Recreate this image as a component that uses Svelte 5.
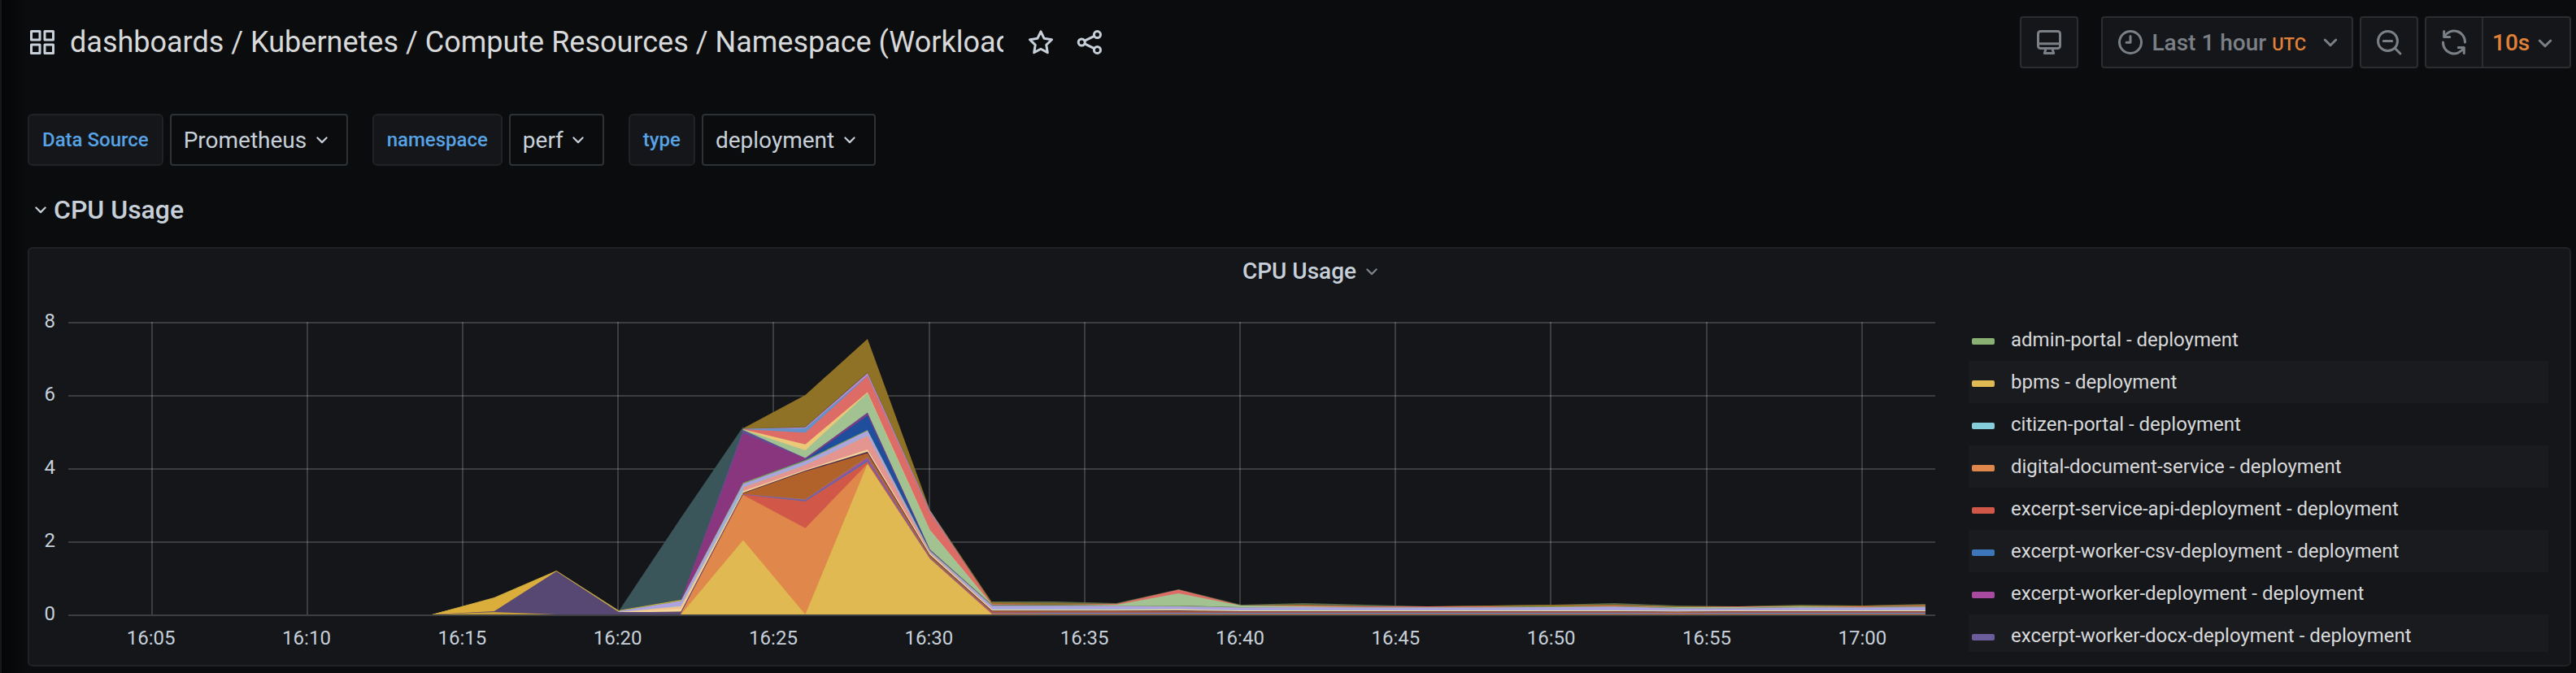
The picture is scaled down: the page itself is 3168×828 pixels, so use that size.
<script>
  const filters = [
    { id: 'datasource', label: 'Data Source', value: 'Prometheus' },
    { id: 'namespace', label: 'namespace', value: 'perf' },
    { id: 'type', label: 'type', value: 'deployment' }
  ];

  const legend = [
    ['admin-portal - deployment', '#8ab073'],
    ['bpms - deployment', '#e0b952'],
    ['citizen-portal - deployment', '#86cddc'],
    ['digital-document-service - deployment', '#e0874b'],
    ['excerpt-service-api-deployment - deployment', '#d15848'],
    ['excerpt-worker-csv-deployment - deployment', '#3c76b8'],
    ['excerpt-worker-deployment - deployment', '#a84a9f'],
    ['excerpt-worker-docx-deployment - deployment', '#6b5c9a']
  ];

  const times = ['16:05', '16:10', '16:15', '16:20', '16:25', '16:30', '16:35', '16:40', '16:45', '16:50', '16:55', '17:00'];
  const values = [8, 6, 4, 2, 0];

  const W = 2296;
  const H = 372;
  const base = 368;
  const tickX = (i) => Math.round(102.5 + i * 191.2);
  const x = (sample) => 447.3 + sample * 76.52;

  // Each layer: colour, first sample (0 = 16:14, every two minutes), heights above the axis.
  // Painted from the top of the stack down to the axis.
  const layers = [
    ['#3a565b', 3, [4, 119, 231, 0]],
    ['#5d6a48', 9, [16, 16, 14, 31, 12, 14, 12, 10, 11, 12, 14, 11, 10, 12, 11, 13]],
    ['#8f7226', 5, [229, 270, 339, 129, 15, 14, 13, 30, 11, 12, 10, 10, 11, 12, 12, 10, 10, 11, 11, 12]],
    ['#4f5f30', 5, [228.5, 231, 298, 128, 13]],
    ['#c383cb', 5, [228.3, 230.3, 297, 128, 12]],
    ['#6392cb', 5, [228.2, 229, 294, 127, 12]],
    ['#dc6c65', 5, [228, 223.7, 293.3, 126, 13, 12, 13, 30.5, 11, 11, 10, 10, 10, 10, 11, 9, 10, 10, 10, 11]],
    ['#ebc979', 5, [227.8, 209.3, 273.5, 104, 12]],
    ['#a2c391', 5, [227.6, 202, 272.5, 104, 12, 12, 12, 26, 11, 10, 9, 9, 9, 10, 10, 9, 9, 10, 9, 10]],
    ['#5f4f92', 4, [17, 227, 192.5, 248.5, 80, 12, 12, 11, 11, 9, 9, 9, 9, 9, 10, 10, 8, 8, 9, 9, 10]],
    ['#8a367f', 4, [17, 223, 192, 247, 80, 11]],
    ['#1f4f9c', 5, [161.5, 190.5, 245, 79.3, 11]],
    ['#dbae3c', 0, [0, 21, 54, 5, 18, 0]],
    ['#7ea35a', 0, [0, 20, 53, 4.5, 17, 162, 190, 227, 79, 11.5, 11.5, 11, 11, 9, 9, 9, 9, 9, 10, 10, 8, 8, 9, 9, 10]],
    ['#dbae3c', 0, [0, 20, 53, 4, 15, 0]],
    ['#aea2e0', 3, [4, 16.5, 160.5, 188.5, 226, 78, 10.5, 10.5, 10.5, 10, 8.5, 9, 8.5, 8.5, 8.5, 9, 9.5, 7.5, 7.5, 8.5, 8.5, 9]],
    ['#8fb8d4', 3, [3, 11, 157.5, 185, 221, 77, 7, 7, 7, 7, 5.5, 6, 5.5, 5.5, 5.5, 5.5, 5.5, 5, 5, 5.5, 5.5, 5.5]],
    ['#e4958f', 5, [156.5, 184, 220, 76.5, 6.5]],
    ['#f2bf93', 3, [3, 10.3, 152, 178, 203, 75.5, 6.5]],
    ['#f4d598', 3, [3, 7, 151.3, 178, 202.5, 75, 6, 6, 6, 6.5, 5, 5, 5, 5, 5, 5, 5, 4.5, 5, 5, 5, 5]],
    ['#4a2a50', 3, [2.5, 3.5, 149.7, 177, 200.3, 73.5, 4.8, 4.8, 4.8, 5, 4, 4, 4, 4, 4, 4, 4, 3.5, 4, 4, 4, 4]],
    ['#574773', 0, [0, 4, 53, 3, 3, 149, 0]],
    ['#b1622b', 4, [1.5, 149, 176, 198.5, 72.5, 4, 4, 4, 4, 3.5, 3.5, 3.5, 3.5, 3.5, 3.5, 3.5, 3, 3.5, 3.5, 3.5, 3.5]],
    ['#8f8150', 4, [1, 148.3, 142, 194.3, 70.5, 2.6]],
    ['#a84a9f', 4, [1, 148, 141.2, 193, 70, 2.5, 2.5, 2.5, 2.5, 2.5, 2.5, 2.5, 2.5, 2.5, 2.5, 2.5, 2, 2.5, 2.5, 2.5, 2.5]],
    ['#3c76b8', 4, [1, 147.6, 140.2, 190, 69.5, 2, 2, 2, 2, 2, 2, 2, 2, 2, 2, 2, 1.5, 2, 2, 2, 2]],
    ['#d15848', 4, [1, 147.4, 139.3, 188.3, 69, 1.5, 1, 1, 1, 1, 1, 1, 1, 1, 1, 1, 1, 1, 1, 1, 1]],
    ['#e0874b', 4, [1, 147, 106.3, 185.5, 68.7, 1, 1, 1, 1, 1, 1, 1, 1, 1, 1, 1, 1, 1, 1, 1, 1]],
    ['#c9a13a', 0, [0, 3, 0]],
    ['#e0b952', 4, [0, 91.5, 0, 185.2, 68.5, 0]]
  ];

  function area([, first, heights]) {
    const top = heights.map((h, i) => `${x(first + i).toFixed(1)},${(base - h).toFixed(1)}`);
    return `${x(first).toFixed(1)},${base} ${top.join(' ')} ${x(first + heights.length - 1).toFixed(1)},${base}`;
  }
</script>

{#snippet chevron(cls)}
  <svg class={cls} viewBox="0 0 24 24" aria-hidden="true"><path d="M7.500 10l4.500 4.500L16.500 10" /></svg>
{/snippet}

<div class="page">
  <header class="topbar">
    <svg class="icon" viewBox="0 0 24 24" aria-hidden="true">
      <path d="M3 3h7v7H3zM14 3h7v7h-7zM3 14h7v7H3zM14 14h7v7h-7z" />
    </svg>
    <h1><a href="#dashboards">dashboards / Kubernetes / Compute Resources / Namespace (Workloads)</a></h1>
    <button class="plain" aria-label="Mark as favorite">
      <svg class="icon" viewBox="0 0 24 24"><path d="M12 3.200l2.750 5.700 6.250.9-4.500 4.400 1.050 6.250L12 17.500l-5.550 2.950L7.500 14.200 3 9.800l6.250-.9z" /></svg>
    </button>
    <button class="plain" aria-label="Share dashboard">
      <svg class="icon" viewBox="0 0 24 24">
        <circle cx="5.500" cy="12" r="2.700" /><circle cx="18.300" cy="5.700" r="2.700" /><circle cx="18.300" cy="18.300" r="2.700" />
        <path d="M8 10.800l7.800-3.900M8 13.200l7.800 3.900" />
      </svg>
    </button>
    <div class="tools">
      <button class="tool tv" aria-label="Cycle view mode">
        <svg class="icon" viewBox="0 0 24 24"><rect x="3" y="3" width="18" height="14" rx="2" /><path d="M3 13.200h18M9.500 17l-1.300 4h7.600l-1.300-4" /></svg>
      </button>
      <button class="tool range">
        <svg class="icon" viewBox="0 0 24 24"><circle cx="12" cy="12" r="9" /><path d="M12 7v5.200H8.700" /></svg>
        <span>Last 1 hour <small>UTC</small></span>
        {@render chevron('icon')}
      </button>
      <button class="tool" aria-label="Zoom out">
        <svg class="icon" viewBox="0 0 24 24"><circle cx="11" cy="11" r="8" /><path d="M7.500 11h7M17 17l4.300 4.300" /></svg>
      </button>
      <div class="refresh">
        <button class="tool" aria-label="Refresh dashboard">
          <svg class="icon" viewBox="0 0 24 24">
            <path d="M3.800 3v4.700h4.700M4.100 7.400A9 9 0 0 1 21 12M20.200 21v-4.700h-4.700M19.900 16.600A9 9 0 0 1 3 12" />
          </svg>
        </button>
        <div class="select interval">
          <select aria-label="Refresh interval"><option>10s</option></select>
          {@render chevron('icon')}
        </div>
      </div>
    </div>
  </header>

  <form class="filters">
    {#each filters as f}
      <div class="filter">
        <label for={f.id}>{f.label}</label>
        <div class="select">
          <select id={f.id}><option>{f.value}</option></select>
          {@render chevron('icon small')}
        </div>
      </div>
    {/each}
  </form>

  <h2><button class="plain row">{@render chevron('icon small')}CPU Usage</button></h2>

  <section class="panel">
    <h3><button class="plain">CPU Usage{@render chevron('icon small')}</button></h3>
    <div class="body">
      <div class="yaxis">
        {#each values as v}<span>{v}</span>{/each}
      </div>
      <div class="plot">
        <svg class="chart" viewBox="0 0 {W} {H}" preserveAspectRatio="none" role="img" aria-label="CPU Usage">
          <g class="grid">
            {#each times as _, i}<rect x={tickX(i) - 1} y="8" width="2" height="360" />{/each}
            {#each values as _, i}<rect x="0" y={8 + i * 90} width={W} height="2" />{/each}
          </g>
          {#each layers as layer}<polygon points={area(layer)} fill={layer[0]} />{/each}
        </svg>
        <div class="xaxis">
          {#each times as t}<span>{t}</span>{/each}
        </div>
      </div>
      <ul class="legend">
        {#each legend as [name, color]}
          <li><i style:background={color}></i><button class="plain">{name}</button></li>
        {/each}
      </ul>
    </div>
  </section>
</div>

<style>
  :global(body) {
    background: #0b0c0e;
  }
  .page {
    box-sizing: border-box;
    min-height: 100vh;
    padding: 20px 6px 8px 32px;
    border-left: 2px solid #17181b;
    background: linear-gradient(90deg, #040506, #0b0c0e 32px);
    font-family: Roboto, sans-serif;
    color: #c7d0d9;
  }
  h1, h2, h3, ul {
    margin: 0;
    padding: 0;
    font-weight: 500;
  }
  button, select {
    font: inherit;
    color: inherit;
  }
  .plain {
    display: flex;
    align-items: center;
    padding: 0;
    border: 0;
    background: none;
  }
  .icon {
    flex: none;
    width: 36px;
    height: 36px;
    fill: none;
    stroke: currentColor;
    stroke-width: 2;
    stroke-linecap: round;
    stroke-linejoin: round;
  }
  .small {
    width: 30px;
    height: 30px;
    stroke-width: 1.7;
  }
  .topbar {
    display: flex;
    align-items: center;
    height: 64px;
  }
  h1 {
    flex: 0 1 1148px;
    min-width: 0;
    margin-left: 16px;
    overflow: hidden;
    white-space: nowrap;
    font-size: 36px;
    line-height: 48px;
    font-weight: 400;
  }
  h1 a {
    color: #d8d9da;
    text-decoration: none;
  }
  .topbar > .plain {
    margin-left: 24px;
  }
  .topbar > h1 + .plain {
    margin-left: 28px;
  }
  .tools {
    display: flex;
    gap: 8px;
    margin-left: auto;
    color: #7b8087;
    font-size: 28px;
    font-weight: 500;
  }
  .tool {
    display: flex;
    align-items: center;
    box-sizing: border-box;
    height: 64px;
    padding: 0 16px;
    border: 2px solid #2b2d30;
    border-radius: 4px;
    background: #141619;
    white-space: nowrap;
  }
  .tv {
    margin-right: 20px;
  }
  .range {
    padding-right: 8px;
  }
  .range span {
    margin: 0 12px 0 8px;
  }
  small {
    color: #e0813a;
    font-size: 22px;
  }
  .refresh {
    display: flex;
  }
  .refresh .tool {
    border-radius: 4px 0 0 4px;
  }
  .select {
    position: relative;
  }
  select {
    appearance: none;
    box-sizing: border-box;
    height: 64px;
    padding: 0 48px 0 15px;
    border: 2px solid #2c3235;
    border-radius: 4px;
    background: #0b0c0e;
    font-size: 28px;
  }
  .select .icon {
    position: absolute;
    top: 17px;
    right: 17px;
    pointer-events: none;
  }
  .interval select {
    padding: 0 48px 0 11px;
    border-color: #2b2d30;
    border-left: 0;
    border-radius: 0 4px 4px 0;
    background: #141619;
    color: #e0813a;
  }
  .interval .icon {
    top: 15px;
    right: 14px;
  }
  .filters {
    display: flex;
    flex-wrap: wrap;
    gap: 30px;
    margin-top: 56px;
  }
  .filter {
    display: flex;
    gap: 8px;
  }
  .filter label {
    box-sizing: border-box;
    height: 64px;
    padding: 0 16px;
    border: 2px solid #202226;
    border-radius: 6px;
    background: #141619;
    color: #57a3e5;
    font-size: 24px;
    font-weight: 500;
    line-height: 60px;
  }
  h2 {
    margin-top: 32px;
    font-size: 32px;
    line-height: 44px;
  }
  .row {
    gap: 1px;
    height: 44px;
    padding-left: 1px;
  }
  .panel {
    box-sizing: border-box;
    margin-top: 24px;
    height: 516px;
    border: 2px solid #202226;
    border-radius: 6px;
    background: #141619;
  }
  h3 {
    display: flex;
    justify-content: center;
    height: 54px;
    font-size: 28px;
  }
  h3 .icon {
    margin: 2px -34px 0 4px;
    opacity: 0.6;
  }
  .body {
    display: flex;
    align-items: flex-start;
    margin-top: 28px;
    padding-right: 26px;
    font-size: 24px;
    line-height: 24px;
  }
  .yaxis {
    display: flex;
    flex-direction: column;
    gap: 66px;
    width: 32px;
    margin: -5px 16px 0 0;
    text-align: right;
  }
  .plot {
    flex: 1;
    min-width: 0;
  }
  .chart {
    display: block;
    width: 100%;
    height: 372px;
  }
  .grid {
    fill: #fff;
    fill-opacity: 0.17;
  }
  .xaxis {
    display: grid;
    grid-template-columns: repeat(12, 1fr);
    margin: 13px -6px 0 6px;
    text-align: center;
  }
  .legend {
    flex: 0 1 713px;
    min-width: 0;
    height: 410px;
    margin: 4px 0 0 41px;
    overflow: hidden;
    list-style: none;
    color: #d8d9da;
  }
  .legend li {
    display: flex;
    align-items: center;
    gap: 20px;
    height: 52px;
    padding-left: 4px;
    white-space: nowrap;
    font-weight: 400;
  }
  .legend li:nth-child(even) {
    background: #1a1b1f;
  }
  .legend i {
    width: 28px;
    height: 8px;
    margin-top: 4px;
    border-radius: 2px;
  }
</style>
